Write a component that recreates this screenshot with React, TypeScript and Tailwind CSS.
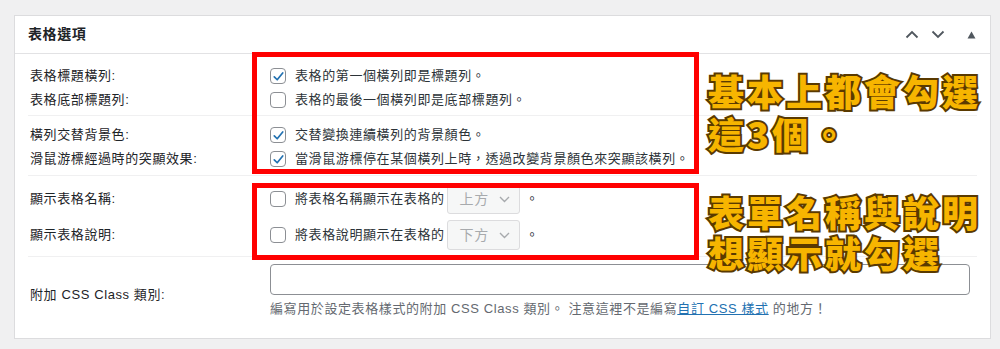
import React from "react";

const FONT = "font-['Liberation_Sans','Noto_Sans_CJK_TC',sans-serif]";

function Checkbox({ checked }: { checked?: boolean }) {
  return (
    <span className="mr-[9px] flex h-[16px] w-[16px] shrink-0 items-center justify-center rounded-[4px] border border-[#8c8f94] bg-white">
      {checked && (
        <svg width="13" height="13" viewBox="0 0 20 20">
          <path d="M3.5 10.5 L8 15 L16.5 4.5" fill="none" stroke="#2271b1" strokeWidth="2.6" strokeLinecap="round" strokeLinejoin="round" />
        </svg>
      )}
    </span>
  );
}

function Select({ value }: { value: string }) {
  return (
    <span className="mx-[2px] flex h-[30px] w-[73px] items-center justify-between rounded-[3px] border border-[#dcdcde] bg-[#f6f7f7] pl-[12px] pr-[9px] text-[14px] text-[#a7aaad]">
      <span>{value}</span>
      <svg width="11" height="7" viewBox="0 0 11 7">
        <path d="M1 1 L5.5 5.5 L10 1" fill="none" stroke="#a7aaad" strokeWidth="1.4" />
      </svg>
    </span>
  );
}

function Row({ label, h, children }: { label: string; h: string; children: React.ReactNode }) {
  return (
    <div className={`flex items-center ${h}`}>
      <div className="w-[242px] shrink-0 pl-[2px] text-[#1d2327]">{label}</div>
      <div className="flex items-center text-[#2c3338]">{children}</div>
    </div>
  );
}

export default function App() {
  const anno =
    "font-['Noto_Sans_CJK_TC',sans-serif] font-black text-[36px] tracking-[3px] text-[#f7b500] [-webkit-text-stroke:4px_#5a3a00] [paint-order:stroke_fill] whitespace-nowrap";
  return (
    <div className={`h-[349px] w-[1000px] overflow-hidden bg-[#f0f0f1] pl-[14px] pt-[15px] ${FONT} text-[13px] tracking-[0.6px]`}>
      <div className="relative h-[324px] w-[977px] border border-[#dcdcde] bg-white">
        {/* header */}
        <div className="flex h-[38px] items-center border-b border-[#e2e2e4] pl-[13px]">
          <span className="text-[14px] font-semibold text-[#1d2327]">表格選項</span>
          <div className="ml-auto flex items-center pr-[9px]">
            <span className="flex w-[26px] justify-center">
              <svg width="14" height="9" viewBox="0 0 14 9">
                <path d="M1.5 7.5 L7 2 L12.5 7.5" fill="none" stroke="#50575e" strokeWidth="1.8" />
              </svg>
            </span>
            <span className="flex w-[26px] justify-center">
              <svg width="14" height="9" viewBox="0 0 14 9">
                <path d="M1.5 1.5 L7 7 L12.5 1.5" fill="none" stroke="#50575e" strokeWidth="1.8" />
              </svg>
            </span>
            <span className="ml-[10px] flex w-[20px] justify-center">
              <svg width="9" height="8" viewBox="0 0 9 8">
                <path d="M4.5 0.5 L8.5 7.5 L0.5 7.5 Z" fill="#50575e" />
              </svg>
            </span>
          </div>
        </div>

        {/* content */}
        <div className="px-[13px]">
          <div className="h-[62px] border-b border-[#f0f0f1] pt-[10px]">
            <Row label="表格標題橫列:" h="h-[24px]">
              <Checkbox checked />
              <span>表格的第一個橫列即是標題列。</span>
            </Row>
            <Row label="表格底部標題列:" h="h-[24px]">
              <Checkbox />
              <span>表格的最後一個橫列即是底部標題列。</span>
            </Row>
          </div>
          <div className="h-[60px] border-b border-[#f0f0f1] pt-[7px]">
            <Row label="橫列交替背景色:" h="h-[24px]">
              <Checkbox checked />
              <span>交替變換連續橫列的背景顏色。</span>
            </Row>
            <Row label="滑鼠游標經過時的突顯效果:" h="h-[24px]">
              <Checkbox checked />
              <span>當滑鼠游標停在某個橫列上時，透過改變背景顏色來突顯該橫列。</span>
            </Row>
          </div>
          <div className="h-[81px] border-b border-[#f0f0f1] pt-[5px]">
            <Row label="顯示表格名稱:" h="h-[36px]">
              <Checkbox />
              <span>將表格名稱顯示在表格的</span>
              <Select value="上方" />
              <span className="ml-[4px]">。</span>
            </Row>
            <Row label="顯示表格說明:" h="h-[36px]">
              <Checkbox />
              <span>將表格說明顯示在表格的</span>
              <Select value="下方" />
              <span className="ml-[4px]">。</span>
            </Row>
          </div>
          <div className="flex pt-[7px]">
            <div className="w-[242px] shrink-0 pl-[2px] pt-[22px] leading-[18px] text-[#1d2327]">附加 CSS Class 類別:</div>
            <div className="flex flex-col">
              <div className="h-[31px] w-[700px] rounded-[4px] border border-[#8c8f94] bg-white" />
              <div className="mt-[5px] leading-[18px] text-[#646970]">
                編寫用於設定表格樣式的附加 CSS Class 類別。 注意這裡不是編寫
                <a className="text-[#2271b1] underline">自訂 CSS 樣式</a> 的地方！
              </div>
            </div>
          </div>
        </div>

        {/* overlays: red highlight boxes */}
        <div className="absolute left-[237px] top-[36px] h-[122px] w-[447px] border-[5px] border-[#ff0000]" />
        <div className="absolute left-[237px] top-[167px] h-[77px] w-[447px] border-[5px] border-[#ff0000]" />

        {/* overlays: annotations */}
        <div className={`absolute left-[693px] top-[53px] leading-[43px] ${anno}`}>
          <div>基本上都會勾選</div>
          <div>這3個。</div>
        </div>
        <div className={`absolute left-[693px] top-[175px] leading-[41px] ${anno}`}>
          <div>表單名稱與說明</div>
          <div>想顯示就勾選</div>
        </div>
      </div>
    </div>
  );
}
